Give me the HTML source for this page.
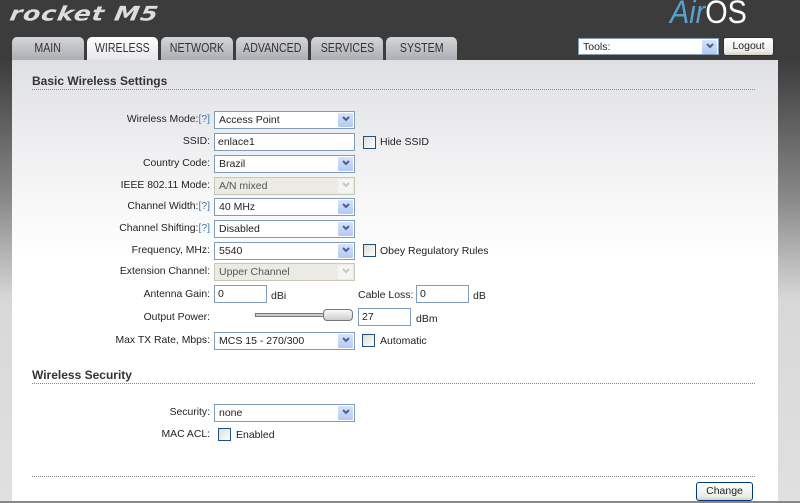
<!DOCTYPE html>
<html><head><style>
*{margin:0;padding:0;box-sizing:border-box}
body{width:800px;height:503px;overflow:hidden;position:relative;font-family:"Liberation Sans",sans-serif;font-size:10.5px;color:#222;background:linear-gradient(#3c3c3c 0,#3c3c3c 60px,#8a8a8a 200px,#d8d8d8 300px,#e0e0e0 503px)}
.a{position:absolute}
.logo{left:12px;top:2px;color:#ddd;font-style:italic;font-weight:bold;font-size:25px;letter-spacing:1px;font-family:"DejaVu Sans",sans-serif;transform:skewX(-10deg) scaleY(.8);transform-origin:left top}
.airos{left:670px;top:-6px;font-size:32px;font-family:"Liberation Sans",sans-serif;transform:scaleX(.9);transform-origin:left}
.tab{top:37px;height:24px;background:linear-gradient(#d4d6d8,#a9adb2);border-radius:5px 5px 0 0;color:#333;font-size:12.5px;text-align:center;line-height:23px}
.tab span{display:inline-block;transform:scaleX(.85)}
.tab.on{background:linear-gradient(#fff,#e6e7e9)}
.panel{left:12px;top:60px;width:766px;height:443px;background:linear-gradient(#dfe0e3 0,#f4f4f5 120px,#fff 200px,#fff)}
h3{position:absolute;font-size:12px;color:#333;font-weight:bold}
.dot{position:absolute;border-top:1px dotted #888;height:0}
.lb{position:absolute;right:590px;text-align:right;white-space:nowrap;font-size:10.4px;color:#222}
.lb b{font-weight:normal;color:#3a7ab8}
.sel{position:absolute;left:214px;width:141px;height:18px;border:1px solid #7f9db9;background:#fff;padding-left:4px;line-height:16px;font-size:10.5px}
.sel:after{content:"";position:absolute;right:1px;top:1px;width:15px;height:14px;background:linear-gradient(#d7e3fb,#b3c8f3);border-radius:1px}
.sel svg{position:absolute;right:4px;top:4px;z-index:1}
.sel.dis{background:#ebebe4;color:#555;border-color:#c9c7ba}
.sel.dis:after{background:#f4f4f0}
.sel.dis svg path{stroke:#c8c8c8}
.inp{position:absolute;height:18px;border:1px solid #7f9db9;background:#fff;padding-left:3px;line-height:16px;font-size:10.5px}
.cb{position:absolute;width:13px;height:13px;border:1px solid #1c5180;background:linear-gradient(135deg,#dcdcd7,#fff)}
.t{position:absolute;white-space:nowrap;font-size:10.5px}
.btn{position:absolute;border:1px solid #003c74;border-radius:3px;background:linear-gradient(#fff,#ecebe6 80%,#d6d0c5);text-align:center;font-size:10.5px}
</style></head><body>
<div class="a logo">rocket M5</div>
<div class="a airos"><span style="color:#5aa0d0;font-style:italic">Air</span><span style="color:#fff">OS</span></div>
<div class="a tab" style="left:12px;width:72px"><span>MAIN</span></div>
<div class="a tab on" style="left:87px;width:71px"><span>WIRELESS</span></div>
<div class="a tab" style="left:161px;width:72px"><span>NETWORK</span></div>
<div class="a tab" style="left:236px;width:72px"><span>ADVANCED</span></div>
<div class="a tab" style="left:311px;width:72px"><span>SERVICES</span></div>
<div class="a tab" style="left:386px;width:71px"><span>SYSTEM</span></div>
<div class="sel" style="left:578px;top:38px;width:141px;height:17px">Tools:<svg width="8" height="6"><path d="M1 1L4 4L7 1" stroke="#4d6185" stroke-width="2" fill="none"/></svg></div>
<div class="btn" style="left:723px;top:37px;width:51px;height:19px;line-height:17px">Logout</div>
<div class="a panel"></div>
<h3 style="left:32px;top:74px">Basic Wireless Settings</h3>
<div class="dot" style="left:32px;top:89px;width:723px"></div>

<div class="lb" style="top:114px">Wireless Mode:<b>[?]</b></div><div class="sel" style="top:111px">Access Point<svg width="8" height="6"><path d="M1 1L4 4L7 1" stroke="#4d6185" stroke-width="2" fill="none"/></svg></div>
<div class="lb" style="top:136px">SSID:</div><div class="inp" style="left:214px;top:133px;width:141px">enlace1</div>
<div class="cb" style="left:363px;top:136px"></div><div class="t" style="left:380px;top:136px">Hide SSID</div>
<div class="lb" style="top:158px">Country Code:</div><div class="sel" style="top:155px">Brazil<svg width="8" height="6"><path d="M1 1L4 4L7 1" stroke="#4d6185" stroke-width="2" fill="none"/></svg></div>
<div class="lb" style="top:180px">IEEE 802.11 Mode:</div><div class="sel dis" style="top:177px">A/N mixed<svg width="8" height="6"><path d="M1 1L4 4L7 1" stroke="#4d6185" stroke-width="2" fill="none"/></svg></div>
<div class="lb" style="top:201px">Channel Width:<b>[?]</b></div><div class="sel" style="top:198px">40 MHz<svg width="8" height="6"><path d="M1 1L4 4L7 1" stroke="#4d6185" stroke-width="2" fill="none"/></svg></div>
<div class="lb" style="top:223px">Channel Shifting:<b>[?]</b></div><div class="sel" style="top:220px">Disabled<svg width="8" height="6"><path d="M1 1L4 4L7 1" stroke="#4d6185" stroke-width="2" fill="none"/></svg></div>
<div class="lb" style="top:245px">Frequency, MHz:</div><div class="sel" style="top:242px">5540<svg width="8" height="6"><path d="M1 1L4 4L7 1" stroke="#4d6185" stroke-width="2" fill="none"/></svg></div>
<div class="cb" style="left:363px;top:244px"></div><div class="t" style="left:380px;top:245px">Obey Regulatory Rules</div>
<div class="lb" style="top:266px">Extension Channel:</div><div class="sel dis" style="top:263px">Upper Channel<svg width="8" height="6"><path d="M1 1L4 4L7 1" stroke="#4d6185" stroke-width="2" fill="none"/></svg></div>
<div class="lb" style="top:289px">Antenna Gain:</div><div class="inp" style="left:214px;top:285px;width:53px">0</div><div class="t" style="left:271px;top:290px">dBi</div>
<div class="t" style="left:358px;top:289px">Cable Loss:</div><div class="inp" style="left:416px;top:285px;width:53px">0</div><div class="t" style="left:473px;top:290px">dB</div>
<div class="lb" style="top:312px">Output Power:</div>
<div class="a" style="left:255px;top:313px;width:75px;height:4px;border:1px solid #777;background:#ccc"></div>
<div class="a" style="left:323px;top:309px;width:30px;height:12px;border:1px solid #777;border-radius:4px;background:linear-gradient(#fafafa,#ccc)"></div>
<div class="inp" style="left:358px;top:308px;width:53px">27</div><div class="t" style="left:416px;top:313px">dBm</div>
<div class="lb" style="top:335px">Max TX Rate, Mbps:</div><div class="sel" style="top:332px">MCS 15 - 270/300<svg width="8" height="6"><path d="M1 1L4 4L7 1" stroke="#4d6185" stroke-width="2" fill="none"/></svg></div>
<div class="cb" style="left:362px;top:334px"></div><div class="t" style="left:380px;top:335px">Automatic</div>

<h3 style="left:32px;top:368px">Wireless Security</h3>
<div class="dot" style="left:32px;top:383px;width:723px"></div>
<div class="lb" style="top:407px">Security:</div><div class="sel" style="top:404px">none<svg width="8" height="6"><path d="M1 1L4 4L7 1" stroke="#4d6185" stroke-width="2" fill="none"/></svg></div>
<div class="lb" style="top:429px">MAC ACL:</div><div class="cb" style="left:218px;top:428px"></div><div class="t" style="left:236px;top:429px">Enabled</div>

<div class="dot" style="left:32px;top:476px;width:723px"></div>
<div class="btn" style="left:696px;top:482px;width:57px;height:19px;line-height:17px">Change</div>
<div class="a" style="left:0;top:501px;width:800px;height:2px;background:#888"></div>
</body></html>
